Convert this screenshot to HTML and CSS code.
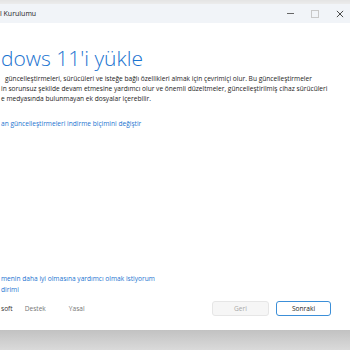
FILE: index.html
```html
<!DOCTYPE html>
<html lang="tr">
<head>
    <meta charset="UTF-8">
    <meta name="viewport" content="width=device-width, initial-scale=1.0">
    <title>Windows 11 Kurulumu</title>
    <link rel="stylesheet" href="styles.css">
</head>
<body>
    <div class="window">
        <div class="titlebar">
            <span class="title">l Kurulumu</span>
            <div class="controls">
                <span class="ctl min"></span>
                <span class="ctl max"></span>
                <svg class="ctl close" width="9" height="9" viewBox="0 0 9 9">
                    <path d="M1 1 L8 8 M8 1 L1 8" stroke="#333" stroke-width="1"/>
                </svg>
            </div>
        </div>

        <main class="content">
            <h1>dows 11'i yükle</h1>
            <div class="intro">
                <span class="line first">güncelleştirmeleri, sürücüleri ve isteğe bağlı özellikleri almak için çevrimiçi olur. Bu güncelleştirmeler</span>
                <span class="line">in sorunsuz şekilde devam etmesine yardımcı olur ve önemli düzeltmeler, güncelleştirilmiş cihaz sürücüleri</span>
                <span class="line">e medyasında bulunmayan ek dosyalar içerebilir.</span>
            </div>
            <a class="link change" href="#">an güncelleştirmeleri indirme biçimini değiştir</a>

            <div class="spacer"></div>

            <a class="link line" href="#">menin daha iyi olmasına yardımcı olmak istiyorum</a>
            <a class="link line" href="#">dirimi</a>

            <div class="footer">
                <div class="footer-links">
                    <span class="brand">soft</span>
                    <a href="#">Destek</a>
                    <a class="legal" href="#">Yasal</a>
                </div>
                <div class="buttons">
                    <button class="btn" disabled>Geri</button>
                    <button class="btn primary">Sonraki</button>
                </div>
            </div>
        </main>
    </div>
</body>
</html>
```

FILE: styles.css
```css
html, body {
    margin: 0;
    padding: 0;
}

body {
    width: 350px;
    height: 350px;
    overflow: hidden;
    font-family: "Open Sans", "Noto Sans", sans-serif;
    color: #1b1b1b;
    background: linear-gradient(#e4e4e4 0, #ececec 4px, #c2c2c2 330px, #dadada 350px);
}

.window {
    margin-top: 4px;
    height: 326px;
    background: #fff;
    display: flex;
    flex-direction: column;
}

.titlebar {
    height: 19px;
    background: #f1f4f8;
    display: flex;
    align-items: center;
    justify-content: space-between;
    font-size: 7px;
    color: #222;
}

.controls {
    display: flex;
    align-items: center;
    gap: 17px;
    padding-right: 6px;
}

.ctl {
    display: block;
}

.min {
    width: 7px;
    height: 1px;
    background: #666;
}

.max {
    width: 6px;
    height: 6px;
    border: 1px solid #c8c8c8;
}

.close {
    width: 8px;
    height: 8px;
}

.content {
    flex: 1;
    display: flex;
    flex-direction: column;
    padding: 0 0 14px 1px;
}

h1 {
    margin: 22px 0 3px 0;
    font-size: 21px;
    font-weight: 300;
    color: #1a73d0;
    line-height: 26px;
}

.intro {
    display: flex;
    flex-direction: column;
}

.line {
    display: block;
    white-space: nowrap;
    font-size: 6.6px;
    line-height: 10px;
}

.intro .first {
    padding-left: 4px;
}

.link {
    color: #1a73d0;
    text-decoration: none;
}

.change {
    margin-top: 15px;
    font-size: 6.6px;
}

.content > .link.line {
    line-height: 11px;
}

.spacer {
    flex: 1;
}

.footer {
    margin-top: 6px;
    display: flex;
    align-items: center;
    justify-content: space-between;
    padding-right: 19px;
}

.footer-links {
    display: flex;
    gap: 12px;
    font-size: 6.6px;
}

.brand {
    color: #333;
}

.footer-links a {
    color: #777;
    text-decoration: none;
}

.footer-links .legal {
    margin-left: 11px;
}

.buttons {
    display: flex;
    gap: 7px;
}

.btn {
    width: 57px;
    height: 15px;
    font-family: inherit;
    font-size: 6.6px;
    border-radius: 3px;
    border: 1px solid #e6e6e6;
    background: #f6f6f6;
    color: #a8a8a8;
    padding: 0;
}

.btn.primary {
    width: 55px;
    background: #fff;
    border: 1px solid #3c8fd8;
    color: #1b1b1b;
}
```
